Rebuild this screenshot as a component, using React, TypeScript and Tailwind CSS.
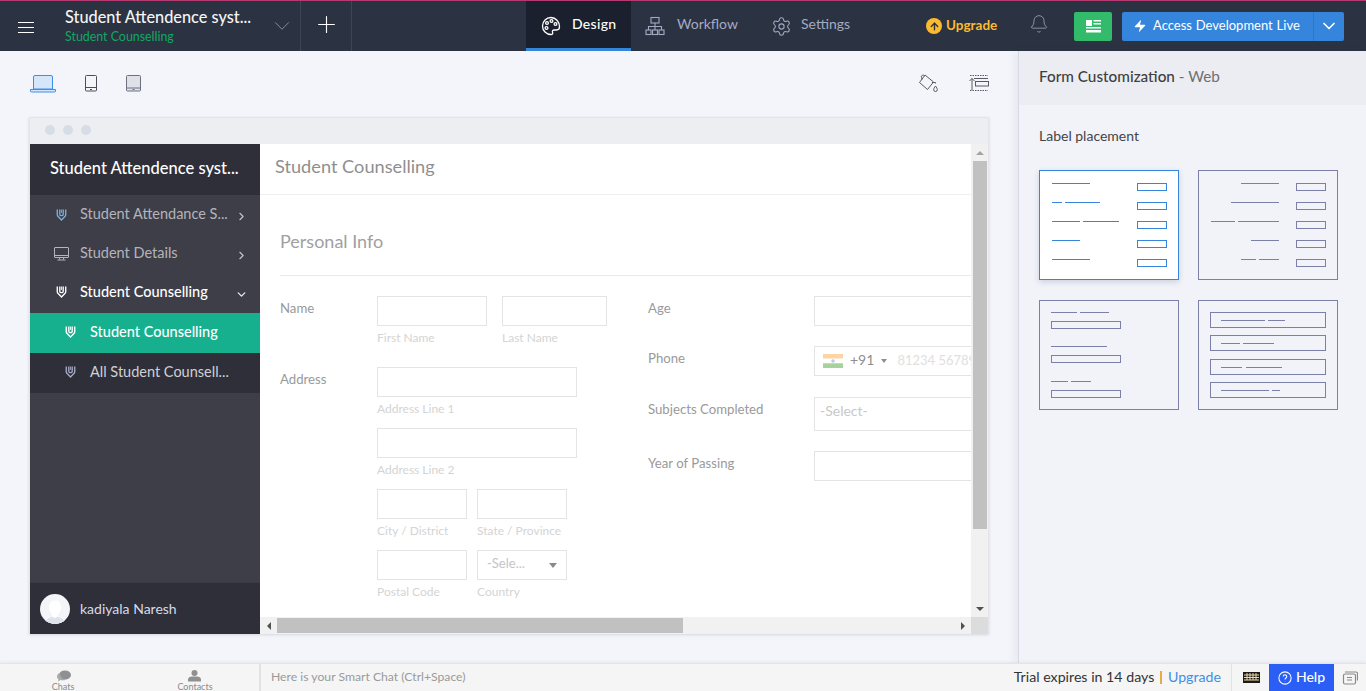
import React from "react";
import { ChevronDown, ChevronRight, Bell, Settings, Zap, ArrowUp, Plus } from "lucide-react";

const Shield = ({ className = "" }: { className?: string }) => (
  <svg width="11" height="14" viewBox="0 0 13 15" fill="none" stroke="currentColor" className={className}>
    <path d="M1.500 1v6.200c0 1 .5 1.800 1.300 2.400L6.500 13.500l3.700-3.900c.8-.6 1.300-1.400 1.300-2.400V1" strokeWidth="1.600" />
    <path d="M4.500 1v5.500c0 1 .8 1.800 2 1.800s2-.8 2-1.800V1" strokeWidth="1.600" />
    <path d="M6.500 1v4" strokeWidth="1" />
  </svg>
);

const Monitor = () => (
  <svg width="15" height="14" viewBox="0 0 15 14" fill="none" stroke="currentColor" strokeWidth="1">
    <rect x="0.5" y="0.5" width="14" height="10" rx="0.5" />
    <path d="M1 8.500h13M5.500 11v1.500M9.500 11v1.500M3.500 13h8" />
  </svg>
);

const Caret = () => (
  <div className="w-0 h-0 border-x-[4px] border-x-transparent border-t-[5px] border-t-[#8a8a8a]" />
);

function Side({ label, icon, right, cls, iconIndent }: { label: string; icon: React.ReactNode; right?: React.ReactNode; cls: string; iconIndent?: boolean }) {
  return (
    <div className={`flex items-center ${iconIndent ? "pl-[33px] pb-[2px]" : "pl-[24px]"} ${cls}`}>
      <div className={`w-[15px] flex justify-center ${iconIndent ? "mr-[12px]" : "mr-[11px]"}`}>{icon}</div>
      <span className="flex-1 text-[14.5px] leading-none whitespace-nowrap">{label}</span>
      {right && <div className="w-[25px] pt-[4px]">{right}</div>}
    </div>
  );
}

const Input = ({ w, h = "h-[30px]", children }: { w: string; h?: string; children?: React.ReactNode }) => (
  <div className={`${w} ${h} shrink-0 border border-[#e4e4e4] bg-white flex items-center overflow-hidden`}>{children}</div>
);

const Hint = ({ children, w }: { children: string; w: string }) => (
  <div className={`${w} mt-[5px] text-[12px] leading-[14px] text-[#d4d4d4] whitespace-nowrap`}>{children}</div>
);

const Thumb = ({ children }: { children: React.ReactNode }) => (
  <svg width="140" height="110" viewBox="0 0 140 110" fill="none" strokeWidth="1">{children}</svg>
);

function Card({ active, children }: { active?: boolean; children: React.ReactNode }) {
  return (
    <div className={`w-[140px] h-[110px] ${active ? "bg-white shadow-[0_2px_6px_rgba(60,70,110,0.2)]" : ""}`}>
      <Thumb>
        <g stroke={active ? "#3585dc" : "#7a80a8"}>
          <rect x="0.5" y="0.5" width="139" height="109" />
          {children}
        </g>
      </Thumb>
    </div>
  );
}

const L = ({ y, a, b }: { y: number; a: number; b: number }) => <path d={`M${a} ${y}.5H${b}`} />;
const B = ({ x, y, w, h }: { x: number; y: number; w: number; h: number }) => <rect x={x + 0.5} y={y + 0.5} width={w} height={h} />;

export default function App() {
  return (
    <div className="w-[1366px] h-[691px] overflow-hidden flex flex-col bg-[#f3f5fa] font-[Lato,sans-serif]">
      {/* Top bar */}
      <header className="h-[51px] shrink-0 bg-[#2b3242] border-t border-[#b53a6f] flex items-stretch text-white">
        <div className="w-[51px] flex items-center justify-center">
          <div className="w-[16px] flex flex-col gap-[4px] pt-[2px]">
            <div className="h-px bg-white" />
            <div className="h-px bg-white" />
            <div className="h-px bg-white" />
          </div>
        </div>
        <div className="w-[250px] pl-[14px] border-r border-[#3e4656] flex">
          <div className="w-[205px] pt-[6px]">
            <div className="text-[16.3px] leading-[20px] font-medium whitespace-nowrap text-[#f5f5f5]">Student Attendence syst...</div>
            <div className="text-[12.4px] leading-[14px] mt-[3px] text-[#12a862]">Student Counselling</div>
          </div>
          <div className="flex-1 flex items-center -ml-[1px] -mt-[1px]">
            <ChevronDown size={26} strokeWidth={0.9} className="text-[#8a8f9a]" />
          </div>
        </div>
        <div className="w-[51px] border-r border-[#3e4656] flex items-center justify-center pb-[3px]">
          <Plus size={27} strokeWidth={1} />
        </div>
        <div className="w-[174px]" />
        <div className="w-[105px] bg-[#1a202e] border-b-[3px] border-[#3585dc] flex items-center pl-[15px] gap-[11px]">
          <svg width="20" height="20" viewBox="0 0 20 20" fill="none" stroke="white" strokeWidth="1.300" className="mt-[2px]">
            <path d="M10 1.500a8.500 8.500 0 1 0 0 17c1.600 0 2-1 1.600-2-.6-1.300 0-2.500 1.600-2.500h2.300c1.600 0 3-1.200 3-3.200 0-5-3.800-9.300-8.500-9.300z" />
            <circle cx="6" cy="7" r="1.400" />
            <circle cx="10.500" cy="5" r="1.400" />
            <circle cx="14.500" cy="8" r="1.400" />
            <circle cx="5.500" cy="12" r="1.400" />
          </svg>
          <span className="text-[14px] font-medium tracking-[0.3px] -mt-[3px]">Design</span>
        </div>
        <div className="w-[126px] flex items-center pl-[14px] gap-[12px] text-[#a3abc2]">
          <svg width="20" height="20" viewBox="0 0 20 20" fill="none" stroke="currentColor" strokeWidth="1.100">
            <rect x="6" y="1.500" width="8" height="5.500" />
            <rect x="1" y="14" width="5" height="4.500" />
            <rect x="7.500" y="14" width="5" height="4.500" />
            <rect x="14" y="14" width="5" height="4.500" />
            <path d="M10 7v7M3.500 14v-3.500h13V14" />
          </svg>
          <span className="text-[14px] -mt-[6px]">Workflow</span>
        </div>
        <div className="w-[155px] flex items-center pl-[14px] gap-[9px] text-[#a3abc2]">
          <Settings size={21} strokeWidth={1.200} />
          <span className="text-[14px] -mt-[6px]">Settings</span>
        </div>
        <div className="w-[112px] flex items-center gap-[4px] pl-[14px]">
          <div className="w-[16px] h-[16px] rounded-full bg-[#fbbb2c] flex items-center justify-center">
            <ArrowUp size={11} strokeWidth={3} className="text-[#2b3242]" />
          </div>
          <span className="text-[13.500px] font-bold text-[#fbbb2c] -mt-[1px]">Upgrade</span>
        </div>
        <div className="w-[49px] flex items-center pl-[5px]">
          <Bell size={20} strokeWidth={1} className="text-[#a0a4ad] -mt-[4px]" />
        </div>
        <div className="flex items-center">
          <div className="w-[38px] h-[29px] bg-[#31bb6b] rounded-[2px] flex items-center justify-center ml-[1px]">
            <svg width="15" height="13" viewBox="0 0 15 13" fill="white">
              <rect x="0" y="0" width="6" height="6" />
              <rect x="7.500" y="0" width="7.500" height="1.500" />
              <rect x="7.500" y="3" width="7.500" height="1.500" />
              <rect x="0" y="7" width="15" height="1.500" />
              <rect x="0" y="10" width="15" height="2.500" />
            </svg>
          </div>
          <div className="ml-[10px] w-[222px] h-[29px] bg-[#3585dc] rounded-[2px] flex items-center text-white">
            <Zap size={14} fill="white" strokeWidth={0} className="ml-[11px] w-[14px]" />
            <span className="ml-[6px] text-[13px] whitespace-nowrap [word-spacing:0.5px] w-[160px]">Access Development Live</span>
            <div className="flex-1 h-full border-l border-[#2f77c6] flex items-center justify-center">
              <ChevronDown size={20} strokeWidth={2} />
            </div>
          </div>
        </div>
      </header>

      {/* Body */}
      <div className="flex-1 flex min-h-0">
        <main className="flex-1 min-w-0 flex flex-col pl-[29px] pr-[29px] pt-[22px]">
          <div className="h-[44px] shrink-0 flex justify-between">
            <div className="flex items-start ml-[1px]">
              <svg width="26" height="18" viewBox="0 0 26 18" fill="#d5e6fb" stroke="#3f8fe6" strokeWidth="1" className="mt-[2px]">
                <path d="M3.500 14V2a1.500 1.500 0 0 1 1.500-1.500h16A1.500 1.500 0 0 1 22.500 2v12z" />
                <path d="M.5 14.500h25v1.500a1 1 0 0 1-1 1h-23a1 1 0 0 1-1-1z" fill="#d5e6fb" />
              </svg>
              <svg width="12" height="17" viewBox="0 0 12 17" fill="none" stroke="#4a4f5c" strokeWidth="1" className="mt-[2px] ml-[29px]">
                <rect x="0.5" y="0.5" width="11" height="15.500" rx="1" />
                <path d="M.5 12.500h11M5 14.500h2" />
              </svg>
              <svg width="15" height="17" viewBox="0 0 15 17" fill="#dfe1e8" stroke="#6c7080" strokeWidth="1" className="mt-[2px] ml-[29px]">
                <rect x="0.5" y="0.5" width="14" height="15.500" rx="1" />
                <path d="M.5 13h14M6.500 14.500h2" />
              </svg>
            </div>
            <div className="flex items-start">
              <svg width="21" height="21" viewBox="0 0 21 21" fill="none" stroke="#555a66" strokeWidth="1">
                <path d="M7 2l8.500 7-6 7.500L1.500 9.500z" />
                <path d="M4 6.500L3.500 4.500a1.500 1.500 0 0 1 3-1.500M14 9.500h3.500v1" />
                <path d="M17.500 13c1 1.500 1.800 2.500 1.800 3.700a1.800 1.800 0 0 1-3.600 0c0-1.200.8-2.200 1.800-3.700z" />
              </svg>
              <svg width="20" height="17" viewBox="0 0 20 17" fill="none" stroke="#555a66" strokeWidth="1" className="mt-[2px] ml-[30px]">
                <path d="M1 .5h18M1 15.500h18" strokeDasharray="1.500 1" />
                <rect x="6.500" y="6.500" width="13" height="4.500" />
                <path d="M3 15V3.500M.5 6L3 3.500 5.500 6M5 3.500h14" />
              </svg>
            </div>
          </div>

          {/* Browser frame */}
          <div className="w-[960px] h-[517px] shrink-0 flex flex-col border-t border-x border-[#e3e5ea] shadow-[0_1px_3px_rgba(0,0,0,0.12)] bg-white">
            <div className="h-[26px] shrink-0 bg-[#eceef2] flex items-center pl-[15px] pb-[2px] gap-[8px]">
              <div className="w-[10px] h-[10px] rounded-full bg-[#d7dde6]" />
              <div className="w-[10px] h-[10px] rounded-full bg-[#d7dde6]" />
              <div className="w-[10px] h-[10px] rounded-full bg-[#d7dde6]" />
            </div>
            <div className="flex-1 flex min-h-0">
              {/* App sidebar */}
              <aside className="w-[230px] shrink-0 bg-[#3e3e49] flex flex-col">
                <div className="h-[51px] shrink-0 bg-[#2f2f39] flex items-center pl-[20px] pb-[2px] text-[16.500px] font-medium text-white whitespace-nowrap">
                  Student Attendence syst...
                </div>
                <div className="h-[39px] shrink-0 flex"><Side cls="w-full text-[#b4b4ba]" label="Student Attendance S..." icon={<Shield className="text-[#7cb0d6]" />} right={<ChevronRight size={13} className="text-[#c5c5ca]" />} /></div>
                <div className="h-[39px] shrink-0 flex"><Side cls="w-full text-[#b4b4ba]" label="Student Details" icon={<Monitor />} right={<ChevronRight size={13} className="text-[#c5c5ca]" />} /></div>
                <div className="h-[40px] shrink-0 flex"><Side cls="w-full text-white font-medium pb-[2px]" label="Student Counselling" icon={<Shield />} right={<ChevronDown size={13} strokeWidth={2.500} className="text-[#e8e8e8]" />} /></div>
                <div className="h-[40px] shrink-0 flex"><Side iconIndent cls="w-full bg-[#16b08f] text-white font-medium" label="Student Counselling" icon={<Shield />} /></div>
                <div className="h-[40px] shrink-0 flex"><Side iconIndent cls="w-full bg-[#2f2f39] text-[#cfcfd4]" label="All Student Counsell..." icon={<Shield className="text-[#a5a9c4]" />} /></div>
                <div className="flex-1" />
                <div className="h-[52px] shrink-0 bg-[#2f2f39] border-t border-[#3a3a44] flex items-center pl-[10px] gap-[10px]">
                  <div className="w-[30px] h-[30px] rounded-full bg-[#f4f5f8] overflow-hidden flex justify-center">
                    <svg width="30" height="30" viewBox="0 0 30 30" fill="#dfe3ec">
                      <path d="M4 30c0-6 5-6.500 8-8v-2c-2-1-3-4-3-7 0-4 2.500-6.500 6-6.500s6 2.500 6 6.500c0 3-1 6-3 7v2c3 1.500 8 2 8 8z" fill="#ffffff" />
                      <path d="M4 30c1-5 5-6 8-7.500l3 1.500 3-1.500c3 1.500 7 2.500 8 7.500z" />
                    </svg>
                  </div>
                  <span className="text-[14px] text-[#d6dbe6] -mt-[1px]">kadiyala Naresh</span>
                </div>
              </aside>

              {/* Form preview */}
              <div className="flex-1 min-w-0 flex flex-col">
                <div className="flex-1 min-h-0 flex">
                  <div className="flex-1 min-w-0 overflow-hidden">
                    <div className="h-[51px] border-b border-[#f0f0f0] pl-[15px] flex items-center pb-[4px] text-[18.200px] text-[#8f8f8f]">Student Counselling</div>
                    <div className="pl-[20px] w-full">
                      <div className="h-[81px] border-b border-[#e9e9e9] flex items-center pt-[13px] text-[18px] text-[#a0a0a0]">Personal Info</div>
                      <div className="flex pt-[20px]">
                        <div className="w-[368px] shrink-0 text-[13.200px] text-[#9a9a9a]">
                          <div className="flex h-[71px]">
                            <div className="w-[97px] leading-[24px]">Name</div>
                            <div>
                              <Input w="w-[110px]" />
                              <Hint w="w-[110px]">First Name</Hint>
                            </div>
                            <div className="ml-[15px]">
                              <Input w="w-[105px]" />
                              <Hint w="w-[105px]">Last Name</Hint>
                            </div>
                          </div>
                          <div className="flex">
                            <div className="w-[97px] leading-[24px]">Address</div>
                            <div className="flex flex-col gap-[12px]">
                              <div>
                                <Input w="w-[200px]" />
                                <Hint w="w-[200px]">Address Line 1</Hint>
                              </div>
                              <div>
                                <Input w="w-[200px]" />
                                <Hint w="w-[200px]">Address Line 2</Hint>
                              </div>
                              <div className="flex gap-[10px]">
                                <div>
                                  <Input w="w-[90px]" />
                                  <Hint w="w-[90px]">City / District</Hint>
                                </div>
                                <div>
                                  <Input w="w-[90px]" />
                                  <Hint w="w-[90px]">State / Province</Hint>
                                </div>
                              </div>
                              <div className="flex gap-[10px]">
                                <div>
                                  <Input w="w-[90px]" />
                                  <Hint w="w-[90px]">Postal Code</Hint>
                                </div>
                                <div>
                                  <Input w="w-[90px]">
                                    <span className="pl-[9px] pb-[2px] flex-1 text-[13px] text-[#c4c4c4]">-Sele...</span>
                                    <span className="pr-[9px]"><Caret /></span>
                                  </Input>
                                  <Hint w="w-[90px]">Country</Hint>
                                </div>
                              </div>
                            </div>
                          </div>
                        </div>
                        <div className="w-[324px] shrink-0 text-[13.200px] text-[#9a9a9a] overflow-hidden">
                          <div className="flex h-[50px]">
                            <div className="w-[166px] shrink-0 leading-[24px]">Age</div>
                            <Input w="w-[200px]" />
                          </div>
                          <div className="flex h-[51px]">
                            <div className="w-[166px] shrink-0 leading-[24px]">Phone</div>
                            <Input w="w-[200px]">
                              <svg width="20" height="14" viewBox="0 0 20 14" className="ml-[8px] shrink-0">
                                <rect width="20" height="4.700" fill="#fdd5a3" />
                                <rect y="4.700" width="20" height="4.600" fill="#ffffff" />
                                <rect y="9.300" width="20" height="4.700" fill="#a6d39c" />
                                <circle cx="10" cy="7" r="1.800" fill="#c4c6e4" />
                              </svg>
                              <span className="ml-[7px] text-[14px] text-[#8f8f8f] whitespace-nowrap -mt-[3px]">+91</span>
                              <span className="ml-[7px] w-0 h-0 border-x-[3px] border-x-transparent border-t-[4px] border-t-[#8f8f8f]" />
                              <span className="ml-[10px] text-[13px] text-[#e0e0e0] whitespace-nowrap -mt-[1px]">81234 56789</span>
                            </Input>
                          </div>
                          <div className="flex h-[54px]">
                            <div className="w-[166px] shrink-0 leading-[24px]">Subjects Completed</div>
                            <Input w="w-[200px]" h="h-[34px]">
                              <span className="pl-[5px] pb-[7px] text-[14px] text-[#c8c8c8]">-Select-</span>
                            </Input>
                          </div>
                          <div className="flex">
                            <div className="w-[166px] shrink-0 leading-[24px]">Year of Passing</div>
                            <Input w="w-[200px]" />
                          </div>
                        </div>
                      </div>
                    </div>
                  </div>
                  {/* vertical scrollbar */}
                  <div className="w-[17px] shrink-0 bg-[#f1f1f1] flex flex-col items-center">
                    <div className="h-[17px] flex items-center justify-center">
                      <div className="w-0 h-0 border-x-[4px] border-x-transparent border-b-[4px] border-b-[#a3a3a3]" />
                    </div>
                    <div className="w-[14px] h-[368px] bg-[#c1c1c1]" />
                    <div className="flex-1" />
                    <div className="h-[17px] flex items-center justify-center">
                      <div className="w-0 h-0 border-x-[4px] border-x-transparent border-t-[4px] border-t-[#505050]" />
                    </div>
                  </div>
                </div>
                {/* horizontal scrollbar */}
                <div className="h-[17px] shrink-0 bg-[#f1f1f1] flex items-center">
                  <div className="w-[17px] flex items-center justify-center">
                    <div className="w-0 h-0 border-y-[4px] border-y-transparent border-r-[4px] border-r-[#505050]" />
                  </div>
                  <div className="w-[406px] h-[15px] bg-[#c1c1c1]" />
                  <div className="flex-1" />
                  <div className="w-[17px] flex items-center justify-center">
                    <div className="w-0 h-0 border-y-[4px] border-y-transparent border-l-[4px] border-l-[#505050]" />
                  </div>
                  <div className="w-[17px] h-full bg-[#dcdcdc]" />
                </div>
              </div>
            </div>
          </div>
        </main>

        {/* Right panel */}
        <aside className="w-[348px] shrink-0 border-l border-[#d6d9e6] bg-[#f1f3f9] shadow-[-4px_0_8px_rgba(0,0,0,0.05)] flex flex-col">
          <div className="h-[54px] shrink-0 bg-[#ecedf2] flex items-center pl-[20px] pb-[4px] text-[15.300px] font-medium text-[#3f3f3f]">
            Form Customization<span className="font-normal text-[#6f6f6f]">&nbsp;- Web</span>
          </div>
          <div className="pl-[20px] pt-[22px] text-[14px] leading-[17px] text-[#444]">Label placement</div>
          <div className="pl-[20px] pt-[26px] grid grid-cols-[140px_140px] gap-x-[19px] gap-y-[20px]">
            <Card active>
              {[[13, 13, 51], [32, 13, 23], [32, 26, 61], [51, 13, 41], [51, 44, 80], [70, 13, 41], [89, 13, 51]].map(([y, a, b], i) => <L key={i} y={y} a={a} b={b} />)}
              {[13, 32, 51, 70, 89].map((y) => <B key={y} x={98} y={y} w={29} h={7} />)}
            </Card>
            <Card>
              {[[13, 43, 81], [32, 33, 81], [51, 13, 37], [51, 40, 81], [70, 53, 81], [89, 43, 58], [89, 61, 81]].map(([y, a, b], i) => <L key={i} y={y} a={a} b={b} />)}
              {[13, 32, 51, 70, 89].map((y) => <B key={y} x={98} y={y} w={29} h={7} />)}
            </Card>
            <Card>
              {[[12, 12, 38], [12, 41, 70], [46, 12, 68], [81, 12, 29], [81, 32, 52]].map(([y, a, b], i) => <L key={i} y={y} a={a} b={b} />)}
              {[21, 55, 90].map((y) => <B key={y} x={12} y={y} w={69} h={7} />)}
            </Card>
            <Card>
              {[[20, 23, 67], [20, 70, 87], [43, 23, 42], [43, 45, 76], [67, 23, 44], [67, 48, 84], [90, 23, 71], [90, 74, 82]].map(([y, a, b], i) => <L key={i} y={y} a={a} b={b} />)}
              {[12, 35, 59, 82].map((y) => <B key={y} x={12} y={y} w={115} h={15} />)}
            </Card>
          </div>
        </aside>
      </div>

      {/* Footer */}
      <footer className="h-[28px] shrink-0 bg-[#f5f5f5] border-t border-[#e4e4e4] shadow-[0_-1px_3px_rgba(0,0,0,0.06)] flex items-stretch relative">
        <div className="w-[261px] border-r-2 border-[#e2e2e2] flex text-[#8a8a8a]">
          <div className="w-[127px] flex flex-col items-center pt-[6px]">
            <svg width="15" height="12" viewBox="0 0 15 12" fill="#8f9092" className="shrink-0">
              <ellipse cx="9" cy="5" rx="6" ry="4.500" />
              <path d="M1 7a4 4 0 0 1 3-4c-.5 3 2 6 6 6.500-1.500 1-4 1-5.500.5L2 11.500l.5-2.500C1.500 8.500 1 8 1 7z" fill="#a8a9ab" />
            </svg>
            <span className="text-[9px] leading-[9px]">Chats</span>
          </div>
          <div className="w-[134px] pl-[5px] flex flex-col items-center pt-[6px]">
            <svg width="13" height="12" viewBox="0 0 13 12" fill="#8f9092" className="shrink-0">
              <circle cx="6.500" cy="3" r="3" />
              <path d="M0 11.500V9.500c0-2 2-3 4-3h5c2 0 4 1 4 3v2z" />
            </svg>
            <span className="text-[9px] leading-[9px]">Contacts</span>
          </div>
        </div>
        <div className="flex-1 pl-[10px] flex items-center text-[12.200px] text-[#9a9a9a]">Here is your Smart Chat (Ctrl+Space)</div>
        <div className="flex items-center text-[14.200px] text-[#333] whitespace-nowrap pb-[2px]">
          Trial expires in 14 days<span className="mx-[5px] text-[#b56a10]">|</span><span className="text-[#3f8fe6]">Upgrade</span>
        </div>
        <div className="ml-[10px] w-[38px] border-l border-[#e2e2e2] flex items-center justify-center pl-[1px]">
          <svg width="17" height="11" viewBox="0 0 17 11">
            <rect width="17" height="11" fill="#1b1b1b" />
            <path d="M1 3h15M1 5.500h15M1 8h15" stroke="#f3d9a0" strokeWidth="1" />
            <path d="M4 1v7M7 1v7M10 1v7M13 1v7" stroke="#f3d9a0" strokeWidth="1" />
          </svg>
        </div>
        <div className="w-[65px] bg-[#2a5ef5] flex items-center justify-center gap-[4px] text-white text-[14px] font-medium">
          <svg width="14" height="14" viewBox="0 0 24 24" fill="none" stroke="white" strokeWidth="1.800">
            <circle cx="12" cy="12" r="10.500" />
            <path d="M9 9.500a3 3 0 1 1 4.500 2.600c-1 .6-1.500 1.200-1.500 2.400M12 17.500v.5" />
          </svg>
          <span className="-mt-[3px]">Help</span>
        </div>
        <div className="w-[32px] flex items-center justify-center">
          <svg width="16" height="14" viewBox="0 0 16 14" fill="none" stroke="#8a8a8a" strokeWidth="1.200">
            <rect x="1.500" y="3" width="12" height="10" rx="1.500" />
            <path d="M3 1h11a1.500 1.500 0 0 1 1.500 1.500v7M5 6.500h5M5 9h5" />
          </svg>
        </div>
      </footer>
    </div>
  );
}
